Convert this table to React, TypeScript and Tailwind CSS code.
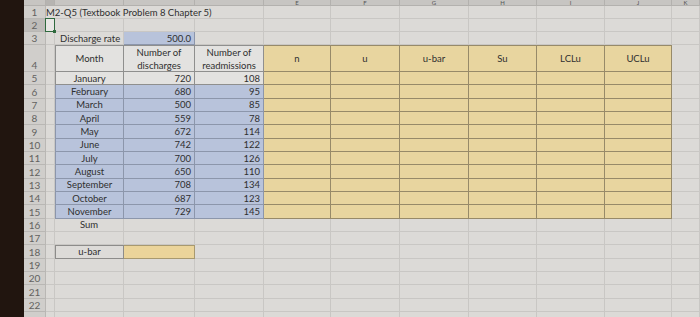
import type { ReactNode } from "react";

// widths of columns A..J, K takes what's left
const WIDTHS = [
  "w-[9px]",
  "w-[69px]",
  "w-[71px]",
  "w-[69px]",
  "w-[67px]",
  "w-[69px]",
  "w-[69px]",
  "w-[68px]",
  "w-[68px]",
  "w-[67px]",
  "flex-1",
];
const LETTERS = ["A", "B", "C", "D", "E", "F", "G", "H", "I", "J", "K"];

const GRID = "border-r border-b border-[#c9c7c4]";
const LIGHT = "bg-[#e3e2e0] border-r border-b border-[#8f8f8e]";
const BLUE = "bg-[#b8c3db] border-r border-b border-[#8c96ab]";
const YELLOW = "bg-[#e8d59f] border-r border-b border-[#978a69]";

type Cell = { t?: ReactNode; cls?: string; align?: string };

const MONTHS: [string, number, number][] = [
  ["January", 720, 108],
  ["February", 680, 95],
  ["March", 500, 85],
  ["April", 559, 78],
  ["May", 672, 114],
  ["June", 742, 122],
  ["July", 700, 126],
  ["August", 650, 110],
  ["September", 708, 134],
  ["October", 687, 123],
  ["November", 729, 145],
];

const HEADS = ["n", "u", "u-bar", "Su", "LCLu", "UCLu"];

function Row({
  n,
  cells = {},
  h = "h-[13.33px]",
  selected,
}: {
  n?: number;
  cells?: Record<number, Cell>;
  h?: string;
  selected?: boolean;
}) {
  return (
    <div className={`flex ${h}`}>
      <div
        className={`w-[22px] shrink-0 border-r border-b border-[#b9b7b4] flex items-end justify-center pb-[1px] text-[10px] leading-none text-[#636260] ${
          selected ? "bg-[#bebcb9]" : "bg-[#d0cecb]"
        }`}
      >
        {n}
      </div>
      {WIDTHS.map((w, i) => {
        const c = cells[i] ?? {};
        return (
          <div
            key={i}
            className={`${w} shrink-0 flex items-center px-[3px] text-[9.5px] leading-[11px] text-[#2f2f2f] whitespace-nowrap ${
              c.cls ?? GRID
            } ${c.align ?? "justify-start"}`}
          >
            {c.t}
          </div>
        );
      })}
    </div>
  );
}

export default function App() {
  const tableRow = (i: number) => {
    const [m, d, r] = MONTHS[i];
    const fill = i === 0 ? LIGHT : BLUE;
    const cells: Record<number, Cell> = {
      1: { t: m, cls: `${fill} border-l`, align: "justify-center" },
      2: { t: d, cls: fill, align: "justify-end" },
      3: { t: r, cls: fill, align: "justify-end" },
    };
    for (let k = 4; k <= 9; k++) cells[k] = { cls: YELLOW };
    return <Row key={i} n={i + 5} cells={cells} />;
  };

  const headCells: Record<number, Cell> = {
    1: { t: "Month", cls: `${LIGHT} border-l border-t`, align: "justify-center" },
    2: {
      t: (
        <span className="text-center leading-[13px]">
          Number of
          <br />
          discharges
        </span>
      ),
      cls: `${LIGHT} border-t`,
      align: "justify-center",
    },
    3: {
      t: (
        <span className="text-center leading-[13px]">
          Number of
          <br />
          readmissions
        </span>
      ),
      cls: `${LIGHT} border-t`,
      align: "justify-center",
    },
  };
  HEADS.forEach((hd, k) => {
    headCells[k + 4] = { t: hd, cls: `${YELLOW} border-t`, align: "justify-center" };
  });

  return (
    <div
      className="flex h-[317px] w-[700px] overflow-hidden bg-[#dcdad7]"
      style={{ fontFamily: "Lato, 'Open Sans', sans-serif" }}
    >
      <div className="w-[24px] shrink-0 bg-[#21150f]" />
      <div className="flex-1 min-w-0">
        {/* column letters strip along the photo's top edge */}
        <div className="flex h-[6px] bg-[#c7c5c2] border-b border-[#b3b1ae]">
          <div className="w-[22px] shrink-0 border-r border-[#b3b1ae]" />
          {WIDTHS.map((w, i) => (
            <div
              key={i}
              className={`${w} shrink-0 border-r border-[#b3b1ae] flex items-center justify-center text-[6px] leading-[5px] text-[#555] ${
                i === 0 ? "bg-[#b6b4b1]" : ""
              }`}
            >
              {i > 3 ? LETTERS[i] : ""}
            </div>
          ))}
        </div>

        <Row
          n={1}
          h="h-[13px]"
          cells={{
            0: {
              t: <span className="relative z-10">M2-Q5 (Textbook Problem 8 Chapter 5)</span>,
              cls: "border-b border-[#c9c7c4] overflow-visible",
              align: "justify-start !pl-0",
            },
            1: { cls: "border-b border-[#c9c7c4]" },
            2: { cls: "border-b border-[#c9c7c4]" },
          }}
        />
        <Row
          n={2}
          h="h-[13px]"
          selected
          cells={{
            0: {
              t: (
                <span className="absolute -left-[1px] -top-[1px] h-[14px] w-[10px] border-[1.5px] border-[#2f6a3e] bg-[#e8e7e5]">
                  <span className="absolute -bottom-[2px] -right-[2px] h-[3px] w-[3px] bg-[#2f6a3e]" />
                </span>
              ),
              cls: `${GRID} relative`,
            },
          }}
        />
        <Row
          n={3}
          h="h-[13px]"
          cells={{
            1: { t: "Discharge rate", align: "justify-start pl-[5px]" },
            2: { t: "500.0", cls: BLUE, align: "justify-end" },
          }}
        />
        <Row n={4} h="h-[27px]" cells={headCells} />
        {MONTHS.map((_, i) => tableRow(i))}
        <Row n={16} cells={{ 1: { t: "Sum", align: "justify-center" } }} />
        <Row n={17} />
        <Row
          n={18}
          cells={{
            1: { t: "u-bar", cls: "border border-[#8d8c8a] bg-[#dddbd8]", align: "justify-center" },
            2: { cls: "bg-[#ebd49a] border-r border-b border-t border-[#a8996f]" },
          }}
        />
        <Row n={19} />
        <Row n={20} />
        <Row n={21} />
        <Row n={22} />
        <Row />
      </div>
    </div>
  );
}
